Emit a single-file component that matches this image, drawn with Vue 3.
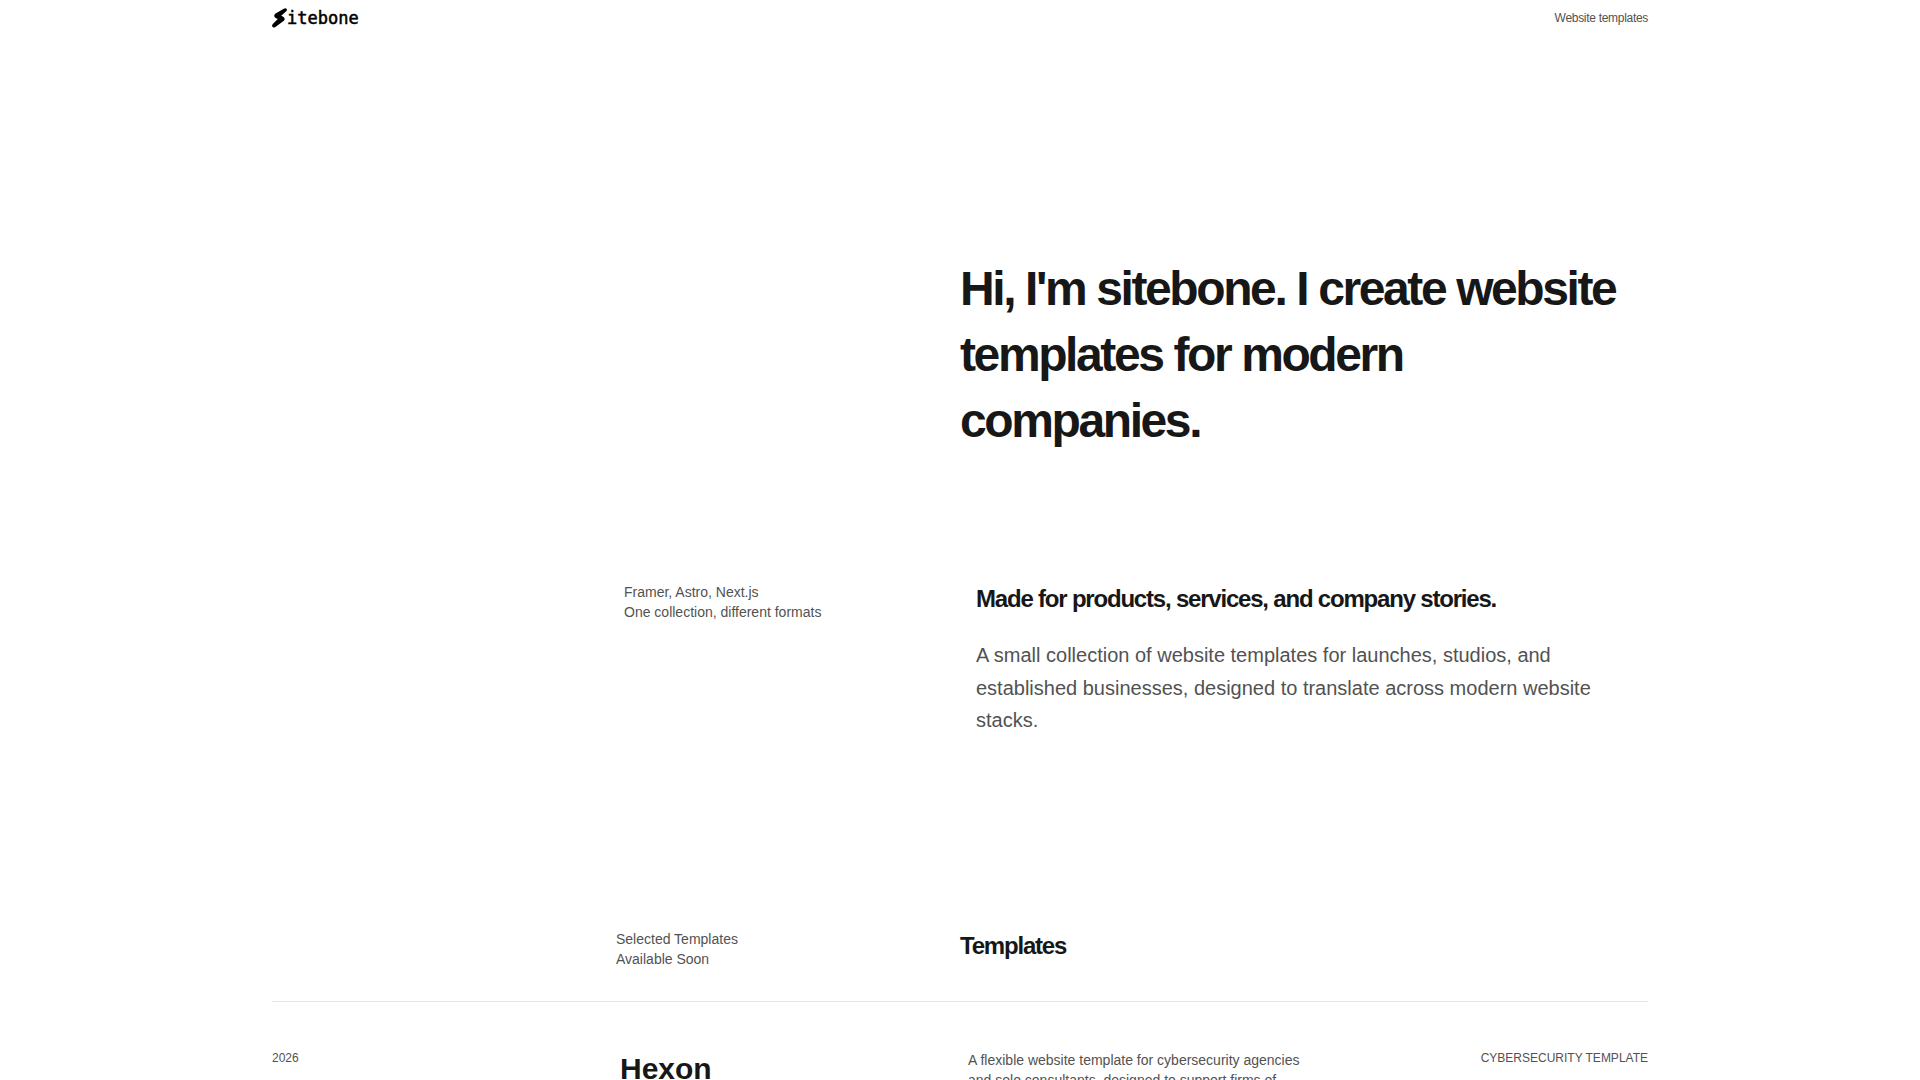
<script setup>
const templates = [
  {
    year: '2026',
    name: 'Hexon',
    summary: 'A flexible website template for cybersecurity agencies and solo consultants, designed to support firms of',
    category: 'Cybersecurity template',
  },
]
</script>

<template>
  <div class="page">
    <header class="header">
      <a class="logo" href="#" aria-label="Sitebone">
        <svg class="mark" viewBox="0 0 15 20" aria-hidden="true">
          <path d="M3.6 5.6 L11.8 .7 Q13.8 -.2 14.7 1 Q15.4 2.4 14 3.6 L9.2 7.8 L11.2 8.8 Q12.8 9.8 12.6 11.4 Q12.4 12.4 11.2 13.2 L3.4 18.9 Q1.4 20.2 .4 18.8 Q-.4 17.4 1 15.8 L5.8 11 L4 10.2 Q2.4 9.6 2.2 8 Q2.2 6.4 3.6 5.6 Z" />
        </svg>
        <span class="wordmark">itebone</span>
      </a>
      <nav>
        <a class="nav-link" href="#templates">Website templates</a>
      </nav>
    </header>

    <main>
      <section class="hero">
        <h1>Hi, I'm sitebone. I create website templates for modern companies.</h1>
      </section>

      <section class="intro">
        <p class="note">Framer, Astro, Next.js<br />One collection, different formats</p>
        <div class="intro-body">
          <h2>Made for products, services, and company stories.</h2>
          <p class="lead">
            A small collection of website templates for launches, studios, and established
            businesses, designed to translate across modern website stacks.
          </p>
        </div>
      </section>

      <section id="templates">
        <div class="section-head">
          <p class="note">Selected Templates<br />Available Soon</p>
          <h2>Templates</h2>
        </div>
        <article v-for="item in templates" :key="item.name" class="entry">
          <span class="meta">{{ item.year }}</span>
          <h3>{{ item.name }}</h3>
          <p class="summary">{{ item.summary }}</p>
          <span class="meta category">{{ item.category }}</span>
        </article>
      </section>
    </main>
  </div>
</template>

<style>
body {
  margin: 0;
  background: #fff;
}
</style>

<style scoped>
.page {
  max-width: 1376px;
  margin: 0 auto;
  color: #171717;
  font-family: "Liberation Sans", Arial, sans-serif;
}
h1,
h2,
h3,
p {
  margin: 0;
}
.header {
  display: flex;
  justify-content: space-between;
  align-items: center;
  height: 36px;
}
.logo {
  display: flex;
  align-items: center;
  color: #000;
  text-decoration: none;
}
.mark {
  width: 15px;
  height: 20px;
  fill: currentColor;
}
.wordmark {
  font: 17px/20px "DejaVu Sans Mono", monospace;
  -webkit-text-stroke: 0.03em currentColor;
}
.nav-link {
  display: block;
  color: #525252;
  font-size: 12px;
  line-height: 16px;
  letter-spacing: -0.025em;
  text-decoration: none;
}
h1,
h2 {
  font-weight: 700;
  line-height: 1.375;
  letter-spacing: -0.05em;
}
h1 {
  grid-column: 3 / -1;
  font-size: 48px;
}
h2 {
  font-size: 24px;
}
.hero,
.intro,
.section-head,
.entry {
  display: grid;
  grid-template-columns: repeat(4, minmax(0, 1fr));
}
.hero {
  padding: 220px 0 128px;
}
.intro {
  column-gap: 32px;
  padding-bottom: 192px;
}
.note,
.summary {
  color: #525252;
  font-size: 14px;
  line-height: 20px;
}
.note {
  grid-column: 2;
}
.intro-body,
.section-head h2 {
  grid-column: 3 / -1;
}
.lead {
  margin-top: 24px;
  color: #525252;
  font-size: 20px;
  line-height: 1.625;
}
.section-head {
  padding-bottom: 32px;
  border-bottom: 1px solid #e5e5e5;
}
.entry {
  column-gap: 16px;
  padding: 48px 0;
}
.meta {
  color: #525252;
  font-size: 12px;
  line-height: 16px;
  text-transform: uppercase;
}
.category {
  text-align: right;
}
h3 {
  font-size: 30px;
  line-height: 38px;
}
</style>
